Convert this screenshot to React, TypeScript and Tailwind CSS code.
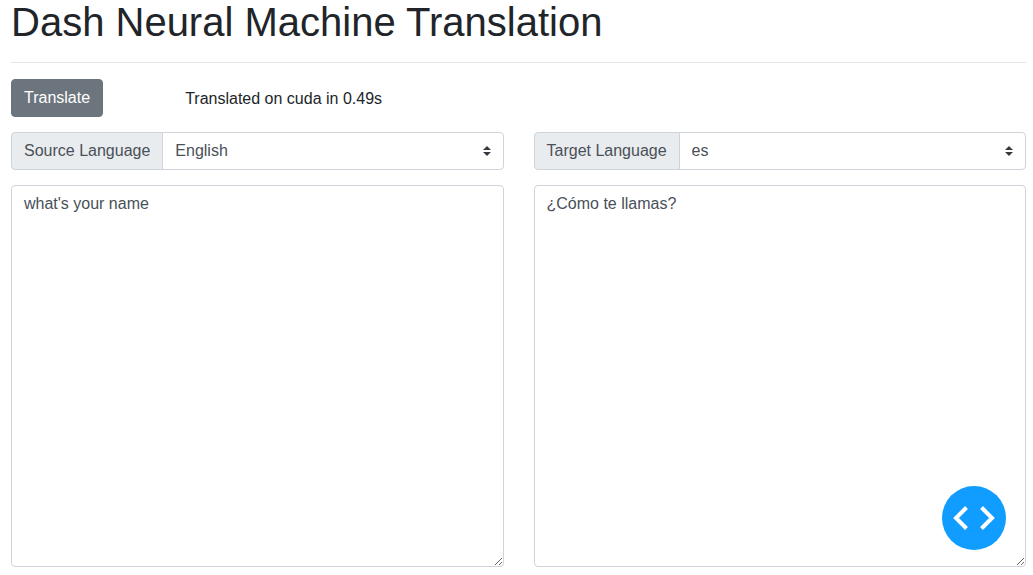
import { useState } from "react";

type LanguagePanelProps = {
  id: string;
  label: string;
  languages: string[];
  initialText: string;
};

function LanguagePanel({ id, label, languages, initialText }: LanguagePanelProps) {
  const [language, setLanguage] = useState(languages[0]);
  const [text, setText] = useState(initialText);

  return (
    <section className="flex min-w-0 flex-1 flex-col gap-[15px]">
      <div className="flex h-[38px]">
        <label
          htmlFor={`${id}-language`}
          className="flex items-center whitespace-nowrap rounded-l border border-[#ced4da] bg-[#e9ecef] px-3 pb-px"
        >
          {label}
        </label>
        <div className="relative -ml-px min-w-0 flex-1">
          <select
            id={`${id}-language`}
            value={language}
            onChange={(e) => setLanguage(e.target.value)}
            className="h-full w-full appearance-none rounded-r border border-[#ced4da] bg-white pb-px pl-3 pr-7"
          >
            {languages.map((name) => (
              <option key={name}>{name}</option>
            ))}
          </select>
          <svg
            viewBox="0 0 4 5"
            aria-hidden="true"
            className="pointer-events-none absolute right-[13px] top-[14px] h-[10px] w-2 fill-[#343a40]"
          >
            <path d="M2 0L0 2h4zm0 5L0 3h4z" />
          </svg>
        </div>
      </div>
      <textarea
        aria-label={`${label} text`}
        value={text}
        onChange={(e) => setText(e.target.value)}
        spellCheck={false}
        className="block w-full flex-1 resize rounded border border-[#ced4da] bg-white px-3 py-1.5"
      />
    </section>
  );
}

export default function App() {
  return (
    <main className="flex min-h-screen flex-col bg-white pb-2 pl-[11px] pr-[7px] font-['Liberation_Sans',Arial,sans-serif] text-base text-[#212529]">
      <h1 className="text-[40px] font-medium leading-[44px]">Dash Neural Machine Translation</h1>
      <hr className="mb-4 mt-[18px] border-t border-black/10" />
      <div className="mb-[15px] grid grid-cols-12 gap-x-[30px]">
        <div className="col-span-2">
          <button
            type="button"
            className="h-[38px] rounded border border-[#6c757d] bg-[#6c757d] px-3 pb-px text-white"
          >
            Translate
          </button>
        </div>
        <p className="col-span-10 pt-2">Translated on cuda in 0.49s</p>
      </div>
      <div className="flex flex-1 gap-[30px] text-[#495057]">
        <LanguagePanel
          id="source"
          label="Source Language"
          languages={["English"]}
          initialText="what's your name"
        />
        <LanguagePanel
          id="target"
          label="Target Language"
          languages={["es"]}
          initialText="¿Cómo te llamas?"
        />
      </div>
      <button
        type="button"
        aria-label="Debug menu"
        className="fixed bottom-[25px] right-[27px] size-16 rounded-full bg-[#119dff]"
      >
        <svg viewBox="0 0 64 64" aria-hidden="true" className="size-16 fill-none stroke-white stroke-4">
          <path d="M24.500 21.500L14 32l10.500 10.500M39.500 21.500L50 32 39.500 42.500" />
        </svg>
      </button>
    </main>
  );
}
